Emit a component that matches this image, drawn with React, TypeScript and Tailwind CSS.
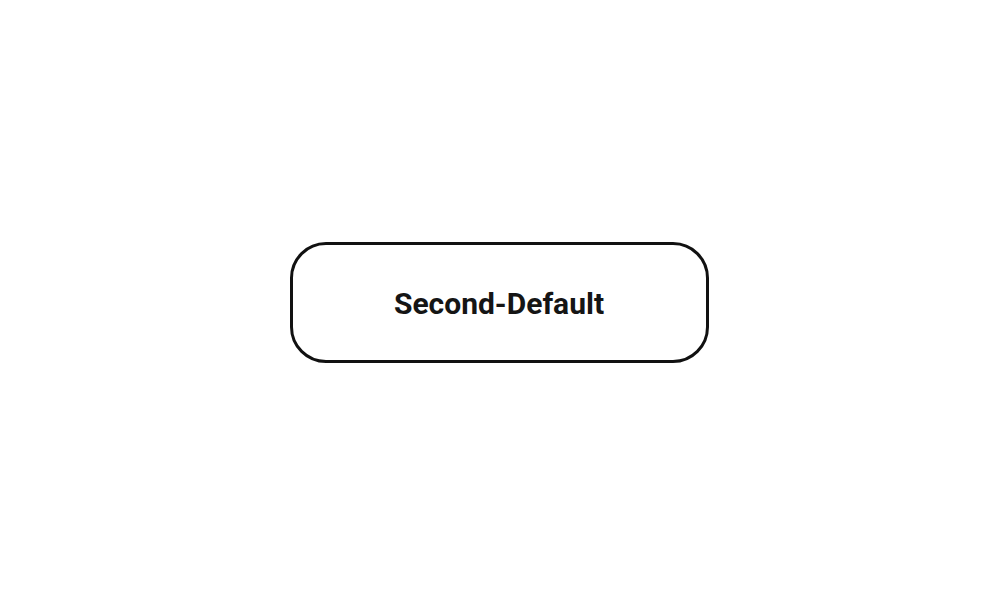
export default function App() {
  return (
    <div className="flex h-[605px] w-full items-center justify-center bg-white">
      <button
        type="button"
        className="mr-[2px] flex h-[121px] w-[419px] items-center justify-center rounded-[36px] border-[3px] border-[#111111] bg-white pt-[2px] text-[30px] font-bold text-[#151515]"
        style={{ fontFamily: "Roboto, 'Noto Sans', sans-serif" }}
      >
        Second-Default
      </button>
    </div>
  );
}
